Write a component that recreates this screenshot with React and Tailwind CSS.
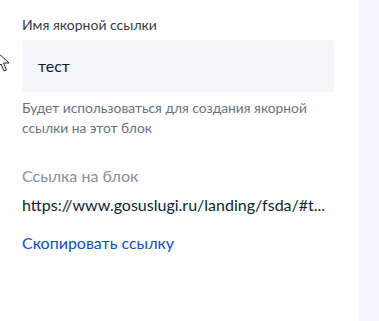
export default function App() {
  return (
    <div className="relative flex h-[321px] w-[379px] overflow-hidden bg-white" style={{ fontFamily: 'Lato, "Noto Sans", sans-serif' }}>
      <div className="w-[358px] shrink-0 pl-[22px] pr-[24px] pt-[15px]">
        <div className="text-[14px] leading-[20px] text-[#333c45]">Имя якорной ссылки</div>
        <div className="mt-[5px] flex h-[52px] items-center rounded-[4px] bg-[#f5f6f9] px-[16px] text-[16px] text-[#0b1f33]">тест</div>
        <div className="mt-[6px] text-[13.8px] leading-[20px] text-[#66727f]">
          Будет использоваться для создания якорной
          <br />
          ссылки на этот блок
        </div>
        <div className="mt-[26px] text-[16px] leading-[24px] text-[#86909c]">Ссылка на блок</div>
        <div className="mt-[5px] truncate text-[16px] leading-[24px] text-[#0b1f33]">https://www.gosuslugi.ru/landing/fsda/#t...</div>
        <div className="mt-[14px] text-[16px] leading-[24px] text-[#0d4cd3]">Скопировать ссылку</div>
      </div>
      <div className="flex-1 bg-[#f5f7fc]" />
      <svg className="absolute left-[-4px] top-[51px]" width="16" height="24" viewBox="0 0 16 24">
        <path d="M1 1 L1 17 L5 13 L8 20 L10.5 19 L7.5 12 L13 12 Z" fill="white" stroke="#222" strokeWidth="1" strokeLinejoin="round" />
      </svg>
    </div>
  );
}
